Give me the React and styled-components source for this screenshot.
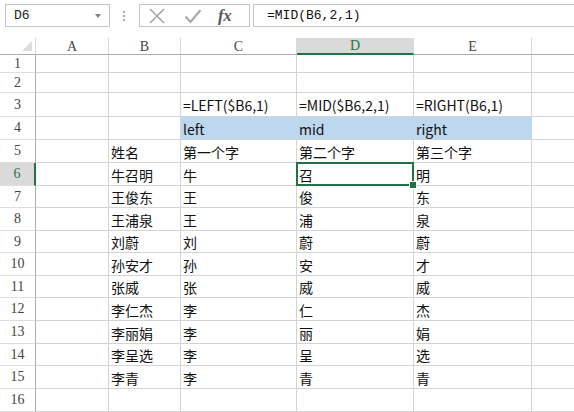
import React from "react";
import styled, { createGlobalStyle, css } from "styled-components";

const GREEN = "#217346";
const GRID = "#d4d4d4";

const GlobalStyle = createGlobalStyle`
  html, body {
    margin: 0;
    padding: 0;
    background: #fff;
    overflow: hidden;
  }
  * {
    box-sizing: border-box;
  }
`;

const COLS = ["A", "B", "C", "D", "E", "F"];
const COL_W = [73, 72, 116, 117, 118, 60];
const ROW_H = [18, 20, 24, 23, 23, 23, 22, 23, 22, 23, 22, 23, 23, 22, 23, 23];

const names = ["牛召明", "王俊东", "王浦泉", "刘蔚", "孙安才", "张威", "李仁杰", "李丽娟", "李呈选", "李青"];

const rows = {
  3: { C: "=LEFT($B6,1)", D: "=MID($B6,2,1)", E: "=RIGHT(B6,1)" },
  4: { C: "left", D: "mid", E: "right" },
  5: { B: "姓名", C: "第一个字", D: "第二个字", E: "第三个字" },
};
names.forEach((n, i) => {
  rows[6 + i] = { B: n, C: n[0], D: n[1], E: n[n.length - 1] };
});

const filled = { 4: ["C", "D", "E"] };
const active = { row: 6, col: "D" };

const Page = styled.div`
  width: 574px;
  height: 412px;
  display: flex;
  flex-direction: column;
  overflow: hidden;
  background: #fff;
`;

const FormulaBar = styled.div`
  height: 38px;
  display: flex;
  align-items: flex-start;
  padding: 4px 0 0 5px;
`;

const NameBox = styled.div`
  width: 105px;
  height: 23px;
  border: 1px solid #c6c6c6;
  display: flex;
  align-items: center;
  justify-content: space-between;
  padding: 0 8px 0 8px;
  font-family: "Liberation Mono", monospace;
  font-size: 13px;
  color: #222;
`;

const DropArrow = styled.span`
  width: 0;
  height: 0;
  border-left: 3.5px solid transparent;
  border-right: 3.5px solid transparent;
  border-top: 4px solid #808080;
  margin-top: 1px;
`;

const Dots = styled.div`
  width: 2px;
  height: 23px;
  margin: 0 14px 0 13px;
  display: flex;
  flex-direction: column;
  justify-content: center;
  gap: 2px;
  span {
    width: 2px;
    height: 2px;
    background: #a8a8a8;
  }
`;

const IconBox = styled.div`
  width: 111px;
  height: 23px;
  border: 1px solid #c6c6c6;
  display: flex;
  align-items: center;
  padding: 0 0 0 8px;
  gap: 18px;
`;

const Fx = styled.span`
  font-family: "Liberation Serif", serif;
  font-style: italic;
  font-weight: bold;
  font-size: 17px;
  color: #5a5a5a;
  letter-spacing: -0.5px;
  margin-left: -2px;
  line-height: 1;
`;

const FormulaInput = styled.div`
  flex: 1;
  height: 23px;
  margin-left: 3px;
  margin-right: -4px;
  border: 1px solid #c6c6c6;
  display: flex;
  align-items: center;
  padding-left: 13px;
  font-family: "Liberation Mono", monospace;
  font-size: 13px;
  color: #111;
`;

const Sheet = styled.div`
  display: grid;
  grid-template-columns: 36px ${COL_W.map((w) => `${w}px`).join(" ")};
  grid-template-rows: 17px ${ROW_H.map((h) => `${h}px`).join(" ")};
`;

const Corner = styled.div`
  position: relative;
  border-right: 1px solid #d8d8d8;
  border-bottom: 1px solid #ababab;
  &::after {
    content: "";
    position: absolute;
    right: 3px;
    bottom: 3px;
    width: 0;
    height: 0;
    border-left: 10px solid transparent;
    border-bottom: 10px solid #dcdcdc;
  }
`;

const headerText = css`
  font-family: "Liberation Serif", serif;
  font-size: 14px;
  color: #444;
  display: flex;
  align-items: center;
  justify-content: center;
`;

const ColHeader = styled.div`
  ${headerText}
  border-right: 1px solid #dadada;
  border-bottom: 1px solid #ababab;
  padding-top: 1px;
  ${({ $active }) =>
    $active &&
    css`
      background: #dadada;
      color: ${GREEN};
      border-bottom: 2px solid ${GREEN};
    `}
`;

const RowHeader = styled.div`
  ${headerText}
  border-right: 1px solid #ababab;
  border-bottom: 1px solid #dedede;
  ${({ $active }) =>
    $active &&
    css`
      background: #dadada;
      color: ${GREEN};
      border-right: 2px solid ${GREEN};
    `}
`;

const Cell = styled.div`
  position: relative;
  border-right: 1px solid ${GRID};
  border-bottom: 1px solid ${GRID};
  display: flex;
  align-items: center;
  padding: 1px 0 0 2px;
  font-family: "Noto Sans CJK SC", "Noto Sans", sans-serif;
  font-size: 14px;
  line-height: 1;
  color: #111;
  white-space: nowrap;
  ${({ $fill }) =>
    $fill &&
    css`
      background: #bdd7ee;
      border-right-color: #bdd7ee;
    `}
  ${({ $active }) =>
    $active &&
    css`
      &::before {
        content: "";
        position: absolute;
        left: -1px;
        top: -1px;
        right: -1px;
        bottom: -1px;
        border: 2px solid ${GREEN};
      }
      &::after {
        content: "";
        position: absolute;
        right: -4px;
        bottom: -4px;
        width: 6px;
        height: 6px;
        background: ${GREEN};
        border: 1px solid #fff;
        z-index: 1;
      }
    `}
`;

const CrossIcon = () => (
  <svg width="18" height="16" viewBox="0 0 18 16">
    <path d="M2 1 L16 15 M16 1 L2 15" stroke="#a6a6a6" strokeWidth="1.6" fill="none" />
  </svg>
);

const CheckIcon = () => (
  <svg width="18" height="16" viewBox="0 0 18 16">
    <path d="M1.5 8.5 L6.5 14 L16.5 2" stroke="#a6a6a6" strokeWidth="2" fill="none" />
  </svg>
);

export default function App() {
  return (
    <Page>
      <GlobalStyle />
      <FormulaBar>
        <NameBox>
          D6
          <DropArrow />
        </NameBox>
        <Dots>
          <span />
          <span />
          <span />
        </Dots>
        <IconBox>
          <CrossIcon />
          <CheckIcon />
          <Fx>fx</Fx>
        </IconBox>
        <FormulaInput>=MID(B6,2,1)</FormulaInput>
      </FormulaBar>

      <Sheet>
        <Corner />
        {COLS.map((c) => (
          <ColHeader key={c} $active={c === active.col}>
            {c === "F" ? null : c}
          </ColHeader>
        ))}
        {ROW_H.map((_, i) => {
          const r = i + 1;
          const data = rows[r] || {};
          return (
            <React.Fragment key={r}>
              <RowHeader $active={r === active.row}>{r}</RowHeader>
              {COLS.map((c) => (
                <Cell
                  key={c}
                  $fill={filled[r] && filled[r].includes(c)}
                  $active={r === active.row && c === active.col}
                >
                  {data[c]}
                </Cell>
              ))}
            </React.Fragment>
          );
        })}
      </Sheet>
    </Page>
  );
}
